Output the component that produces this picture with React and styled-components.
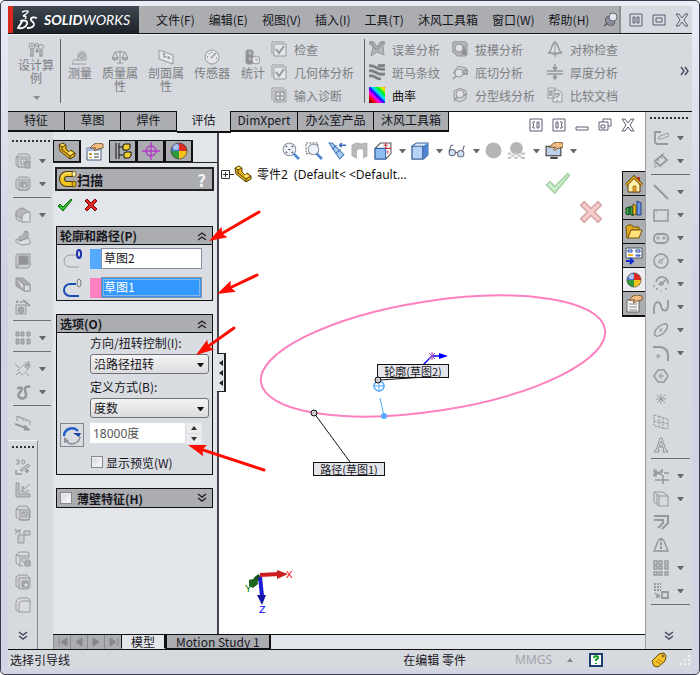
import React, { useState } from 'react';
import styled, { createGlobalStyle, css } from 'styled-components';

const Colors = {
  face: '#d6d9de',
  bar: '#abadb1',
  panel: '#e2e5ea',
  ink: '#16161c',
  dim: '#7c7e82',
  icon: '#96989c',
  blue: '#3399ff',
  pink: '#ff80c0',
};

const GlobalStyle = createGlobalStyle`
  * { box-sizing: border-box; }
  body {
    margin: 0;
    font-family: "Noto Sans CJK SC", sans-serif;
    font-size: 12px;
    line-height: 13px;
    color: ${Colors.ink};
  }
  button, input, select {
    font: inherit;
    color: inherit;
    margin: 0;
    padding: 0;
  }
  button {
    border: 0;
    background: none;
    cursor: pointer;
  }
  svg { display: block; flex: none; }
`

/* ---------- icons ---------- */

const glyphs = {
  cubeA: <><path d="M1 4l3-3h8l3 2v7M1 4v8l2 2h5M1 4h2" /><path d="M3 4h10v10H3z" fill="#cdcfd3" /><path d="M6 6h5v5H6z" fill="#e2e4e7" /><path d="M8 8l3 1h4v6h-5v-4z" fill="#b0b2b6" /></>,
  cubeB: <><path d="M1 4l3-3h8l3 2v9l-2 2H4l-3-2z" fill="#cdcfd3" /><path d="M4 4h9v10H4z" /><path d="M6 6h5v5H6z" fill="#a8aaae" /><path d="M8 8h3v3H8z" fill="#eee" /></>,
  fillet: <><path d="M1 6c0-3 4-5 7-5l6 4c-4 0-7 3-7 7L1 9z" fill="#b4b6ba" /><path d="M7 15v-4c0-3 3-6 8-6v10z" fill="#dfe1e4" /><path d="M1 6v6l6 3" /></>,
  rib: <><path d="M1 9l4 2 8-3 2 3v3l-8 1-6-3z" fill="#dcdee1" /><path d="M4 10V7c3 0 5-3 6-6l2 1v6l-7 3z" fill="#b0b2b6" /><path d="M10 1l3 1v6" /></>,
  shell: <><path d="M1 2l2-1h12v12l-2 2H1z" fill="#c9cbcf" /><path d="M4 3h9v8H4z" fill="#909296" /><path d="M4 11l-3 4M4 11h9l2-1" /></>,
  draft: <><path d="M1 2h7l7 6v7H9L1 10z" fill="#a8aaae" /><path d="M1 2l8 7v6M9 9h6v6H9z" fill="#d9dbde" /></>,
  wizard: <><path d="M1 6h10v9H1z" fill="#cdcfd3" /><circle cx="6" cy="11" r="3" fill="#a8aaae" /><circle cx="5" cy="10" r="1" fill="#eee" /><path d="M8 1l7 6" strokeWidth="2" /><path d="M2 1v3M1 3h3M6 2v2M5 3h3M13 1v1" /></>,
  pattern: <path d="M1 2h3v4H1zM6 2h3v4H6zM12 2h3v4h-3zM1 9h3v5H1zM6 9h3v5H6zM12 9h3v5h-3z" fill="#b0b2b6" strokeLinejoin="round" />,
  refgeo: <><path d="M3 9l6-5 4 5-6 5z" strokeDasharray="2 1" fill="#d9dbde" /><path d="M0 3l4 4M1 14l4-3M11 12l3 3M13 0v8M9 4h7M10 1l5 6M15 1l-5 6" /></>,
  curve: <path d="M2 4c3 0 5-1 5 1s-6 5-3 8 8 1 7-3c-1-3-2-6 0-7s3 0 4-1" strokeWidth="2.6" />,
  instant: <><path d="M2 6V1l13 5v4M5 2v2M8 3v3M11 5v2" /><path d="M0 9l11 4" strokeWidth="2" /><path d="M10 10l5 5-6 0z" fill="#96989c" /></>,
  sketch3d: <><path d="M1 1h3v4H1m1-2h2M7 1h2l1 2-1 2H7z" /><path d="M5 11l8-6 2 2-8 5z" fill="#c3c5c9" /><path d="M1 11v4h6M12 10v4M10 12h4" strokeWidth="1.5" /></>,
  bend: <><path d="M1 1h3v11h11v3H1z" fill="#bcbec2" /><path d="M6 10l9-8M7 4v6h6M9 4l-1 3M12 8l2 1" /></>,
  cubeC: <><path d="M1 4l3-3h8l3 4v8l-2 2H5l-4-3z" fill="#d0d2d6" /><path d="M5 5h9v10H5zM1 4l4 1" /><path d="M7 7h5v5H7zM9 7v3h3" /></>,
  weld: <><path d="M0 1l6 5M6 1L0 6M0 3h6" /><path d="M3 7h12V3H9v4M3 7v8h6V7" fill="#c9cbcf" /></>,
  cubeD: <><path d="M1 4l3-3h9l1 2v4M1 4v8l4 3h3M1 4l4 1h9M5 5v10" /><path d="M7 7h5l3 3v4h-4l-4-4z" fill="#cdcfd3" /><path d="M10 10h5v5h-5z" fill="#b0b2b6" /></>,
  cubeE: <><path d="M1 3l3-2h8l3 3v9l-2 2H5l-4-3z" fill="#d0d2d6" /><path d="M4 4h11M4 4v10" /><path d="M7 7h6v6H7z" fill="#a8aaae" /><path d="M9 9h4v4H9z" fill="#dfe1e4" /></>,
  corner: <path d="M1 13V6c0-3 2-5 5-5h7l2 2v12H4zM4 15V8c0-3 2-4 4-4h7" fill="#d9dbdf" />,
  pencil: <><path d="M15 14H5c-2 0-3-1-3-3V2h6M2 2v9" strokeWidth="1.8" /><path d="M5 9l2-3 8-3 1 3-8 3z" fill="#d9dbde" /></>,
  dimension: <><path d="M2 8l7-6 5 5-7 6z" strokeWidth="1.8" /><path d="M5 6l1 2M8 4l1 2M1 10l3 4M10 1l1-1M3 14h-2" /></>,
  lineG: <path d="M1 1l14 14" strokeWidth="2" />,
  rectG: <><path d="M1 3h14v11H1z" strokeWidth="1.6" /><path d="M3 5h1M12 12h1" /></>,
  slot: <><rect x="1" y="4" width="14" height="9" rx="4" strokeWidth="1.8" /><path d="M4 7h2v2H4zM10 7h2v2h-2z" /></>,
  circle: <><circle cx="8" cy="8" r="7" strokeWidth="1.5" /><path d="M6 7h3v3H6zM9 7l4-4" /></>,
  arc: <><path d="M3 6a6 6 0 0 1 12 2" strokeWidth="1.6" /><path d="M1 9v2M3 13h2M8 15h1M12 13h2M8 5v5M5 8h6M9 7l5-4" strokeWidth="1.4" /></>,
  spline: <path d="M1 15V9c1-8 6-7 7-2s6 7 7 0V1" strokeWidth="1.8" />,
  ellipse: <><ellipse cx="8" cy="8" rx="8" ry="4" transform="rotate(-42 8 8)" strokeWidth="1.5" /><path d="M6 7l3 2M9 6L7 10" /></>,
  filletG: <><path d="M0 2h6c5 0 9 3 9 8v6" strokeWidth="2" /><path d="M3 11h5M5 9v5" /></>,
  polygon: <><path d="M5 2h6l4 6-4 6H5L1 8z" strokeWidth="1.5" /><path d="M5 8h6M8 5v6" /></>,
  point: <path d="M8 3v10M3 8h10M4 4l8 8M12 4l-8 8" />,
  plane: <path d="M1 1l14 4v10L1 12zM6 2v12M10 4v11M1 7l14 3" strokeDasharray="2 1" />,
  textA: <path d="M1 15l1-2 1 0L7 1h2l4 12h1l1 2h-5v-2h1l-1-3H6l-1 3h1v2zM6 9h4L8 4z" />,
  trim: <><path d="M1 3l8 4M1 7l8-4M9 1v4M11 5h5M2 12h14M10 7v9" strokeWidth="1.6" /><circle cx="2" cy="3" r="1.5" /><circle cx="2" cy="7" r="1.5" /></>,
  convert: <path d="M1 1h9l5 4v10H6l-5-4zM1 1l5 4v10M6 5h9M4 3v10" />,
  offset: <path d="M1 2h14v7l-6 6M1 6h9v3l-5 5" strokeWidth="2" />,
  mirror: <><path d="M1 14L5 4c1-3 5-3 6 0l4 10z" strokeWidth="1.5" /><path d="M8 1v14" strokeDasharray="3 1" strokeWidth="2" /></>,
  grid9: <path d="M1 1h3v3H1zM6 1h3v3H6zM12 1h3v3h-3zM1 6h3v3H1zM6 6h3v3H6zM12 6h3v3h-3zM1 12h3v3H1zM6 12h3v3H6zM12 12h3v3h-3z" strokeWidth="1.4" />,
  move: <><path d="M1 1h7M1 4h7M1 7h7" strokeDasharray="2 1" strokeWidth="2" /><path d="M9 9h6v6H9z" strokeWidth="1.8" /><path d="M2 10l4 4M6 11v3H3" strokeWidth="1.5" /></>,
  study: <><circle cx="4" cy="4" r="3" /><circle cx="4" cy="4" r="1" /><circle cx="13" cy="5" r="2.5" /><circle cx="9" cy="3" r="1.5" /><path d="M3 7v7h2V7M12 8v6h2V8M7 9h4M9 6v5" strokeWidth="1.3" /></>,
  measure: <><path d="M1 11h13V5l-2-2H8L6 5v6M0 12v3h14" /><circle cx="10" cy="7" r="2.5" fill="#b9bbbf" /></>,
  scale: <><path d="M8 1v13M3 3h10M5 14h6M0 9l3-6 3 6zM10 9l3-6 3 6z" /><path d="M0 9h6c0 3-6 3-6 0zM10 9h6c0 3-6 3-6 0z" fill="#b9bbbf" /></>,
  section: <><path d="M1 1l14 5v9L1 10z" fill="#e4e6ea" /><path d="M6 9V5m-1 1l1-2 1 2M6 7l5 2m-1-2l2 2-2 1" /></>,
  gauge: <><circle cx="8" cy="8" r="7" fill="#e4e6ea" /><path d="M7 9l5-5M3 8h1M8 3v1M5 4l1 1M12 9h1" strokeWidth="1.5" /></>,
  stats: <><rect x="1" y="1" width="7" height="14" rx="2" fill="#8e9094" /><circle cx="5" cy="4" r="2" fill="#bbb" /><circle cx="5" cy="10" r="2" fill="#bbb" /><circle cx="11" cy="11" r="4" fill="#e4e6ea" /><path d="M11 9v2h2" /></>,
  checkBox: <><path d="M1 13V1h12M3 3h12v12H3z" fill="#e4e6ea" /><path d="M5 8l3 4 5-7" strokeWidth="2" /></>,
  plusBox: <><path d="M1 13V1h12M3 3h12v12H3z" fill="#e4e6ea" /><path d="M5 5h8v8H5zM9 6v6M6 9h6" strokeWidth="1.5" /></>,
  deviation: <><path d="M1 1h4l3 5 3-5h4l-1 4 1 9-7-3-6 4 2-9z" fill="#b4b6ba" /><path d="M2 1l5 8M14 1L8 9M1 4V1h3M12 1h3v3" strokeWidth="1.5" /></>,
  zebra: <path d="M0 2c6-2 7 5 16 3M0 7c6-2 7 5 16 3M0 12c6-2 7 4 12 3M9 1c2 1 4 1 7 0" stroke="#7e8084" strokeWidth="3" />,
  draftA: <><path d="M0 2l3-2h9l3 2v12l-2 1H5l-5-5z" fill="#b0b2b6" /><path d="M12 5l3 9-5-1z" fill="#888a8e" /><circle cx="7" cy="7" r="4" fill="#dfe1e4" /></>,
  undercut: <><path d="M1 9l5-7 8 2 2 6H4z" fill="#cfd1d5" /><circle cx="7" cy="9" r="4" fill="#dfe1e5" /><path d="M4 12l-3 3M12 6h3v4h-3z" strokeWidth="1.5" /></>,
  parting: <><path d="M2 4l6-3 6 3v8l-6 3-6-3z" fill="#cfd1d5" /><circle cx="8" cy="7" r="4" fill="#dfe1e5" /><path d="M5 10l-3 4M11 9l4-2" strokeWidth="1.5" /></>,
  symmetry: <><path d="M1 12c4-1 3-9 7-11 4 2 3 10 7 11z" fill="#dfe1e5" strokeWidth="1.5" /><path d="M8 2v14M4 12c1 2 7 2 8 0" /></>,
  thickness: <><path d="M0 7h16M0 10h16M8 0v5M6 3l2 3 2-3M8 16v-4M6 14l2-3 2 3" strokeWidth="1.5" /></>,
  compare: <><path d="M1 1h7v10H1zM6 3h5l4 3v9H6z" fill="#e4e6ea" /><path d="M2 4h3M2 6h3M2 8h3M9 8c0-2 4-2 3 0l-2 2v1M10 13v1" strokeWidth="1.5" /></>,
};

const Glyph = ({ name, size = 16, color = Colors.icon }) => (
  <svg width={size} height={size} viewBox="0 0 16 16" fill="none" stroke={color}>
    {glyphs[name]}
  </svg>
)

const Caret = ({ color = '#66686c' }) => (
  <svg width="7" height="4" viewBox="0 0 7 4"><path d="M0 0h7L4 4H3z" fill={color} /></svg>
)

const Chevrons = ({ up, right, color = '#222' }) => (
  <svg width="10" height="10" viewBox="0 0 10 10" fill="none" stroke={color} strokeWidth="1.4"
    transform={up ? 'rotate(180)' : right ? 'rotate(-90)' : undefined}>
    <path d="M1 1l4 3 4-3M1 5l4 3 4-3" />
  </svg>
)

const PartIcon = ({ size = 18 }) => (
  <svg width={size} height={size} viewBox="0 0 18 18" stroke="#54400a" strokeLinejoin="round">
    <path d="M1 3l4-2 3 2v4l3 3 2-2 4 3v3l-5 3L2 9z" fill="#e8b41a" />
    <path d="M1 3l3 2 4-2M4 5v3l8 6v3M12 14l5-3" fill="none" />
    <path d="M5 2l2 1-3 1-2-1zM12 9l3 2-3 2-2-2z" fill="#fbe86c" stroke="none" />
  </svg>
)

const Ball = ({ size = 18 }) => (
  <svg width={size} height={size} viewBox="0 0 18 18">
    <path d="M9 9V1a8 8 0 0 0-8 8z" fill="#4a78d8" />
    <path d="M9 9V1a8 8 0 0 1 8 8z" fill="#e02c20" />
    <path d="M9 9h8a8 8 0 0 1-8 8z" fill="#f4c51c" />
    <path d="M9 9H1a8 8 0 0 0 8 8z" fill="#2f9a3c" />
    <circle cx="6" cy="5" r="3" fill="#fff" opacity=".55" />
    <circle cx="9" cy="9" r="8" fill="none" stroke="#4a3a30" strokeWidth=".7" />
  </svg>
)

const Hand = () => (
  <path d="M4 5l4-4 4-1 5 1v4l-5 1-3 2-1-1 2-2H5z" fill="#f0bd82" stroke="#6b4218" strokeWidth=".8" />
)

const SheetIcon = () => (
  <svg width="18" height="18" viewBox="0 0 18 18">
    <path d="M1 5h14v12H1z" fill="#fafcff" stroke="#4b5d7d" />
    <path d="M1 5h14v3H1z" fill="#9eb6dc" />
    <path d="M3 10h3v2H3zM3 14h3v1H3z" fill="#c8942c" />
    <path d="M8 11h5M8 14h5" stroke="#444" />
    <Hand />
  </svg>
)

const TreeIcon = () => (
  <svg width="18" height="18" viewBox="0 0 18 18" stroke="#111">
    <path d="M2 1v16M5 1v16M5 5h4M5 13h4" />
    <path d="M9 3l2-1h5v4l-2 2H9zM10 11l2-1h5v4l-2 2h-5z" fill="#f0cf2c" />
  </svg>
)

const TargetIcon = () => (
  <svg width="18" height="18" viewBox="0 0 18 18" fill="none" stroke="#b43cc8" strokeWidth="1.4">
    <circle cx="9" cy="9" r="5" /><path d="M9 0v18M0 9h18" />
  </svg>
)

const SweepIcon = () => (
  <svg width="18" height="18" viewBox="0 0 18 18" fill="none">
    <path d="M15 4H8a5 5 0 0 0 0 10h7" stroke="#4a3a06" strokeWidth="6" />
    <path d="M15 4H8a5 5 0 0 0 0 10h7" stroke="#f2c522" strokeWidth="4" />
    <path d="M15 3H8c-3 0-5 2-5 5" stroke="#fff2a8" />
    <ellipse cx="15" cy="4" rx="2" ry="3" fill="#fff0a0" stroke="#4a3a06" strokeWidth=".7" />
    <ellipse cx="15" cy="14" rx="2" ry="3" fill="#e8ae18" stroke="#4a3a06" strokeWidth=".7" />
  </svg>
)

const Tick = ({ w = 16, fill = '#2fc02f', edge = '#0c640c' }) => (
  <svg width={w} height={w * 14 / 16} viewBox="0 0 16 14">
    <path d="M1 8l2-2 3 3 8-8 1 1-9 11z" fill={fill} stroke={edge} />
  </svg>
)

const Cross = ({ w = 14, fill = '#e02828', edge = '#7c0a0a' }) => (
  <svg width={w} height={w} viewBox="0 0 14 14">
    <path d="M1 3l2-2 4 4 4-4 2 2-4 4 4 4-2 2-4-4-4 4-2-2 4-4z" fill={fill} stroke={edge} />
  </svg>
)

const ProfileIcon = ({ path }) => (
  <svg width="20" height="20" viewBox="0 0 20 20" fill="none">
    <path d="M14 6H8a6 6 0 0 0 0 12h9" stroke={path ? '#1c4fb4' : '#9a9ca2'} strokeWidth={path ? 2 : 1} />
    <ellipse cx="17" cy="5" rx="2" ry="4" stroke={path ? '#777' : '#1b2fae'} strokeWidth={path ? 1 : 2} />
  </svg>
)

const TwistIcon = () => (
  <svg width="20" height="20" viewBox="0 0 20 20" fill="none">
    <path d="M2 11a8 8 0 0 1 14-5" stroke="#1f5fc8" strokeWidth="2.4" />
    <path d="M11 8h8l-2 4z" fill="#1a3fa0" />
    <path d="M18 12a8 8 0 0 1-14 4" stroke="#8d9096" strokeWidth="1.6" />
    <path d="M2 18v-6l5 4z" fill="#8d9096" />
  </svg>
)

/* ---------- window frame ---------- */

const Frame = styled.div`
  display: flex;
  flex-direction: column;
  min-width: 700px;
  min-height: 100vh;
  padding: 5px 7px;
  border: 1px solid #3a3a4a;
  border-radius: 5px;
  background: linear-gradient(#e9edf6, #d0d2e3 40%, #d3d4e4);
`

const MenuBar = styled.header`
  display: flex;
  height: 28px;
  border-bottom: 1px solid #111;
  background: ${Colors.face};
`

const Logo = styled.div`
  display: flex;
  flex: none;
  align-items: center;
  width: 131px;
  gap: 6px;
  padding-left: 3px;
  border-left: 5px solid #da291c;
  background: linear-gradient(#3f4850, #1c2228);
  color: #fff;
  font-family: Lato, sans-serif;
  font-size: 14px;
  font-style: italic;
`

const Menu = styled.nav`
  display: flex;
  flex: 1;
  align-items: center;
  gap: 14px;
  padding-left: 17px;
  border-right: 2px solid #8d8f93;
  background: ${Colors.bar};
`

const MenuItem = styled.button`
  white-space: nowrap;
`

const WindowButtons = styled.div`
  display: flex;
  align-items: center;
  gap: 9px;
  padding: 0 4px 0 8px;
`

const WinIcon = ({ kind }) => (
  <svg width="14" height="14" viewBox="0 0 14 14" fill="none" stroke="#5c5f72">
    {kind === 'tile' && <path d="M1 1h12v12H1zM4 4h2v6H4zM8 4h2v6H8z" />}
    {kind === 'max' && <path d="M1 2h12v10H1zM4 5h6v4H4z" />}
    {kind === 'close' && <path d="M1 1h3l3 4 3-4h3L9 7l4 6h-3L7 9l-3 4H1l4-6z" />}
    {kind === 'left' && <path d="M1 1h12v12H1zM6 4H4v2l1 1-1 1v2h2M8 4h2v6H8z" />}
    {kind === 'right' && <path d="M1 1h12v12H1zM4 4h2v6H4zM8 4h2v2l-1 1 1 1v2H8" />}
    {kind === 'min' && <path d="M1 9h12v3H1z" />}
    {kind === 'restore' && <path d="M5 1h8v7h-3M5 4V1M1 4h9v8H1zM3 7h4v3H3z" />}
  </svg>
)

/* ---------- ribbon ---------- */

const Ribbon = styled.section`
  display: flex;
  height: 78px;
  padding-top: 4px;
  border-top: 1px solid #eef0f4;
  border-bottom: 1px solid #111;
  background: ${Colors.face};
  color: ${Colors.dim};
`

const RibbonButton = styled.button`
  display: flex;
  flex: none;
  flex-direction: column;
  align-items: center;
  width: ${p => p.$width}px;
  padding: ${p => (p.$first ? '3px 4px 0 8px' : '10px 4px 0')};
  gap: ${p => (p.$first ? 0 : 1)}px;
`

const Rule = styled.div`
  flex: none;
  width: 1px;
  height: 64px;
  margin-right: ${p => p.$gap}px;
  background: #5e6064;
`

const RibbonColumn = styled.div`
  display: flex;
  flex-direction: column;
  margin-right: ${p => p.$gap}px;
`

const RibbonRow = styled.button`
  display: flex;
  align-items: center;
  gap: 7px;
  height: 23px;
  padding-bottom: 3px;
  white-space: nowrap;
  color: ${p => (p.$on ? '#111' : 'inherit')};
`

const More = styled.button`
  margin: 0 2px 8px auto;
`

/* ---------- body ---------- */

const Body = styled.div`
  display: flex;
  flex: 1;
  border-bottom: 1px solid #111;
`

const Workspace = styled.div`
  position: relative;
  display: flex;
  flex: 1;
  flex-direction: column;
  min-width: 0;
  background: #fff;
`

const TabRow = styled.div`
  display: flex;
  height: 20px;
`

const Tab = styled.button`
  height: 20px;
  padding: 0 0 3px;
  width: ${p => p.$width}px;
  border: 1px solid #111;
  border-width: 0 1px 2px 0;
  background: ${Colors.bar};
  white-space: nowrap;
  ${p => p.$active && css`
    height: 22px;
    margin-top: -1px;
    background: ${Colors.face};
    z-index: 1;
  `}
`

const DocButtons = styled.div`
  position: absolute;
  top: 6px;
  right: 10px;
  display: flex;
  gap: 9px;
`

const Work = styled.div`
  display: flex;
  flex: 1;
`

const ToolDock = styled.aside`
  display: flex;
  flex-direction: column;
  width: ${p => (p.$right ? 47 : 45)}px;
  border-left: ${p => (p.$right ? '1px solid #9a9ca0' : '0')};
  background: ${Colors.face};
`

const ToolStrip = styled.div`
  display: flex;
  flex-direction: column;
  padding: ${p => (p.$tall ? '8px 0 6px' : '5px 0 0')};
  ${p => p.$narrow && css`
    flex: 1;
    width: 30px;
    border-right: 1px solid #85878b;
    border-top: 1px solid #f4f5f7;
  `}
`

const Grip = styled.div`
  height: 2px;
  margin: 0 3px 7px 4px;
  background: repeating-linear-gradient(90deg, #333 0 2px, transparent 2px 4px);
`

const Tool = styled.button`
  display: flex;
  align-items: center;
  gap: 8px;
  height: 23px;
  padding-left: 7px;
`

const Divider = styled.div`
  height: 1px;
  margin: 2px 2px 5px 5px;
  background: #6c6e73;
`

const StripMore = styled.button`
  margin: auto auto 8px;
`

/* ---------- property manager ---------- */

const Center = styled.div`
  display: flex;
  flex: 1;
  flex-direction: column;
  min-width: 0;
`

const Stage = styled.div`
  display: flex;
  flex: 1;
`

const Panel = styled.aside`
  width: 166px;
  padding-top: 8px;
  border-right: 2px solid #44464c;
  background: ${Colors.panel};
`

const PanelTabs = styled.div`
  display: flex;
  border-bottom: 1px solid #222;
`

const PanelTab = styled.button`
  display: flex;
  align-items: center;
  justify-content: center;
  width: 28px;
  height: 22px;
  border: 1px solid #111;
  border-width: 1px 2px 1px 1px;
  background: ${Colors.bar};
  ${p => p.$active && css`
    height: 23px;
    margin-bottom: -1px;
    border-color: ${Colors.panel};
    background: ${Colors.panel};
  `}
`

const PanelTitle = styled.h1`
  display: flex;
  align-items: center;
  height: 24px;
  margin: 4px 3px 5px 2px;
  padding: 0 6px 0 2px;
  border: 2px solid #222;
  background: ${Colors.bar};
  font-size: 13px;
  font-weight: 700;
`

const Help = styled.button`
  margin-left: auto;
  color: #f4f4f4;
  font-size: 17px;
  font-weight: 700;
`

const Confirm = styled.div`
  display: flex;
  align-items: center;
  gap: 11px;
  height: 18px;
  margin: 0 0 12px 4px;
`

const Group = styled.section`
  margin: 0 4px 13px 3px;
  border: 1px solid #111;
  background: #d9dce1;
`

const GroupHead = styled.h2`
  display: flex;
  align-items: center;
  justify-content: space-between;
  height: 18px;
  margin: 0;
  padding: 0 5px 0 3px;
  background: ${Colors.bar};
  border-bottom: ${p => (p.$closed ? '0' : '1px solid #111')};
  font-size: 12px;
  font-weight: 700;

  label {
    display: flex;
    align-items: center;
    gap: 5px;
  }
`

const Selections = styled.div`
  display: flex;
  flex-direction: column;
  gap: 8px;
  padding: 3px 10px 2px 5px;
`

const Selection = styled.label`
  display: flex;
  align-items: center;
`

const Swatch = styled.span`
  width: 11px;
  height: 20px;
  margin-left: 8px;
  background: ${p => p.$color};
`

const SelectionInput = styled.input`
  flex: 1;
  min-width: 0;
  height: 21px;
  padding: 0 2px 2px;
  border: 1px solid #8b8da0;
  border-radius: 0;
  background: ${p => (p.$active ? Colors.blue : '#fff')};
  color: ${p => (p.$active ? '#fff' : Colors.ink)};
  outline: ${p => (p.$active ? '1px solid #85b8e6' : 'none')};
  outline-offset: -3px;
`

const Options = styled.div`
  display: flex;
  flex-direction: column;
  padding: 2px 3px 3px;
`

const FieldLabel = styled.label`
  height: 19px;
  padding-top: 1px;
  margin-left: 30px;
`

const SelectBox = styled.div`
  position: relative;
  margin: 0 0 5px 30px;

  select {
    width: 100%;
    height: 20px;
    padding: 0 3px 1px;
    appearance: none;
    border: 1px solid #707278;
    border-radius: 3px;
    background: linear-gradient(#f4f4f4, #dcdcde);
  }
  svg {
    position: absolute;
    right: 5px;
    top: 9px;
    pointer-events: none;
  }
`

const AngleRow = styled.div`
  display: flex;
  align-items: flex-start;
  height: 30px;
`

const DirButton = styled.button`
  display: flex;
  align-items: center;
  justify-content: center;
  width: 24px;
  height: 24px;
  margin-right: 6px;
  border: 1px solid #84868e;
`

const AngleInput = styled.input`
  width: 95px;
  height: 20px;
  padding: 0 3px;
  border: 0;
  background: #fff;
  color: #555;
  font-family: "Noto Sans", "Noto Sans CJK SC", sans-serif;
`

const Spinner = styled.div`
  display: flex;
  flex-direction: column;
  gap: 1px;
  width: 16px;
  margin-left: 1px;

  button {
    display: flex;
    align-items: center;
    justify-content: center;
    height: 10px;
    background: #ececee;
  }
`

const Check = styled.input`
  appearance: none;
  width: 12px;
  height: 12px;
  border: 1px solid #888a90;
  background: linear-gradient(135deg, #d2d5d9, #fff);
  box-shadow: inset 0 0 0 1px #eee;
  &:checked {
    background: #446;
  }
`

const CheckLabel = styled.label`
  display: flex;
  align-items: center;
  gap: 3px;
  height: 18px;
  margin-left: 31px;
`

/* ---------- graphics area ---------- */

const Canvas = styled.main`
  position: relative;
  flex: 1;
  background: #fff;
`

const Handle = styled.button`
  position: absolute;
  left: -2px;
  top: 221px;
  display: flex;
  align-items: center;
  justify-content: center;
  width: 9px;
  height: 39px;
  border: 1px solid #222;
  border-width: 1px 2px 1px 0;
  background: ${Colors.panel};
`

const ViewTools = styled.div`
  position: absolute;
  left: 63px;
  top: 10px;
  display: flex;
  align-items: center;
  gap: 5px;
`

const ViewTool = styled.button`
  display: flex;
  align-items: center;
  gap: 7px;
`

const TreeRoot = styled.div`
  position: absolute;
  left: 2px;
  top: 33px;
  display: flex;
  align-items: center;
  white-space: pre;
  color: #111;
  font-family: "Noto Sans", "Noto Sans CJK SC", sans-serif;

  span {
    margin-left: 5px;
  }
`

const Corner = styled.div`
  position: absolute;
  top: 40px;
  right: 42px;
  display: flex;
  align-items: flex-start;
  gap: 8px;

  button + button {
    margin-top: 28px;
  }
`

const TaskPane = styled.div`
  position: absolute;
  top: 39px;
  right: 0;
  display: flex;
  flex-direction: column;
  width: 23px;
  border: 1px solid #111;
  border-right: 0;
`

const TaskTab = styled.button`
  display: flex;
  align-items: center;
  justify-content: center;
  height: 24px;
  border-bottom: 1px solid #111;
  background: ${p => (p.$active ? '#eceef2' : Colors.bar)};
`

const Drawing = styled.svg`
  position: absolute;
  inset: 0;
  width: 100%;
  height: 100%;
  overflow: visible;
  pointer-events: none;
`

const Callout = styled.div`
  position: absolute;
  left: ${p => p.$x}px;
  top: ${p => p.$y}px;
  width: 72px;
  height: 14px;
  border: 1px solid #111;
  background: #e4e5ea;
  font-size: 11px;
  line-height: 12px;
  text-align: center;
`

/* ---------- bottom ---------- */

const SheetTabs = styled.div`
  display: flex;
  height: 15px;
  border-top: 1px solid #111;
  background: ${Colors.panel};
`

const StepButton = styled.button`
  display: flex;
  align-items: center;
  justify-content: center;
  width: 17px;
  border-left: 1px solid #8a8c90;
  background: ${Colors.bar};
`

const SheetTab = styled.button`
  padding: 0 9px;
  border: 1px solid #111;
  border-width: 0 2px 1px 1px;
  line-height: 12px;
  background: ${p => (p.$active ? Colors.panel : Colors.bar)};
  border-bottom-color: ${p => (p.$active ? Colors.panel : '#111')};
`

const StatusBar = styled.footer`
  display: flex;
  align-items: center;
  height: 19px;
  padding-left: 2px;
  background: ${Colors.face};
`

const Status = styled.span`
  white-space: nowrap;
  flex: ${p => (p.$grow ? 1 : 'none')};
`

const Units = styled.button`
  display: flex;
  align-items: center;
  gap: 15px;
  margin: 0 16px 0 49px;
  color: #a3a5a9;
  font-family: "Noto Sans", sans-serif;
`

const StatusIcons = styled.div`
  display: flex;
  align-items: center;
  gap: 48px;
`

const menus = ['文件(F)', '编辑(E)', '视图(V)', '插入(I)', '工具(T)', '沐风工具箱', '窗口(W)', '帮助(H)']

const evaluate = [
  ['measure', '测量', 34],
  ['scale', '质量属性', 46],
  ['section', '剖面属性', 46],
  ['gauge', '传感器', 46],
  ['stats', '统计', 36],
]

const analysis = [
  [['deviation', '误差分析'], ['zebra', '斑马条纹'], ['curvature', '曲率']],
  [['draftA', '拔模分析'], ['undercut', '底切分析'], ['parting', '分型线分析']],
  [['symmetry', '对称检查'], ['thickness', '厚度分析'], ['compare', '比较文档']],
]

const ribbonTabs = [
  ['特征', 57], ['草图', 56], ['焊件', 56], ['评估', 54], ['DimXpert', 67], ['办公室产品', 76], ['沐风工具箱', 75],
]

// a trailing * marks a tool that opens a flyout, '-' is a divider
const features = ['cubeA*', 'cubeB*', '-', 'fillet*', 'rib', 'shell', 'draft', 'wizard', '-', 'pattern*', '-', 'refgeo*', 'curve*', '-', 'instant']
const weldments = ['sketch3d', 'bend', 'cubeC', 'weld', 'cubeD', 'cubeE', 'corner']
const sketching = [
  'pencil*', 'dimension*', '-', 'lineG*', 'rectG*', 'slot*', 'circle*', 'arc*', 'spline*', 'ellipse*', 'filletG*',
  'polygon', 'point', 'plane', 'textA', '-', 'trim*', 'convert*', 'offset', 'mirror', 'grid9*', 'move*', '-',
]

const Tools = ({ items }) => items.map((item, i) => {
  if (item === '-') return <Divider key={i} />
  const name = item.replace('*', '')
  return (
    <Tool key={i} aria-label={name}>
      <Glyph name={name} />
      {item.endsWith('*') && <Caret />}
    </Tool>
  )
})

const CurvatureIcon = () => (
  <svg width="16" height="16" viewBox="0 0 16 16">
    <defs>
      <linearGradient id="curvature" x1="0" y1="1" x2="1" y2="0">
        <stop offset="0" stopColor="#400" /><stop offset=".2" stopColor="#f00" />
        <stop offset=".35" stopColor="#f0f" /><stop offset=".48" stopColor="#20f" />
        <stop offset=".6" stopColor="#0df" /><stop offset=".75" stopColor="#0e2" />
        <stop offset=".9" stopColor="#fe0" /><stop offset="1" stopColor="#f60" />
      </linearGradient>
    </defs>
    <path d="M0 0h16v16H0z" fill="url(#curvature)" />
  </svg>
)

const viewIcons = {
  zoomFit: <><circle cx="7" cy="7" r="6" fill="#eef3fa" stroke="#8a93a4" /><path d="M4 5V4h1M9 4h1v1M10 9v1H9M5 10H4V9M6 7h2" stroke="#444" fill="none" /><path d="M11 11l5 5" stroke="#4f86d0" strokeWidth="2.5" /></>,
  zoomArea: <><path d="M1 1h11v10H1z" stroke="#777" strokeDasharray="2 1" fill="none" /><circle cx="8" cy="7" r="5" fill="#eef3fa" stroke="#8a93a4" /><path d="M11 11l5 5" stroke="#4f86d0" strokeWidth="2.5" /></>,
  previous: <><path d="M1 1l3 0 11 11-4 4z" fill="#a9cdf2" stroke="#4d7cb4" /><path d="M4 7l4-4M7 11l5-4" stroke="#3a6db8" fill="none" /><path d="M17 3h-6M13 1l-2 2 2 2" stroke="#3a6db8" fill="none" strokeWidth="1.5" /></>,
  section: <path d="M1 3l4-2 5 1 5-1v12l-3 2V7L8 6 5 8v7l-4-2z" fill="#b9babc" stroke="#b0b1b3" />,
  orient: <><path d="M6 1h10v10l-5 5H1V6z" fill="#fff" stroke="#555" /><path d="M1 6h10v10H1z" fill="#8fbcf0" stroke="#2a62b0" /><path d="M11 1v5h5M9 3h4M13 8v3" stroke="#c33" fill="none" /></>,
  display: <><path d="M1 4l4-3h11v11l-4 4H1z" fill="#dbe9fb" stroke="#3d649c" /><path d="M11 4l5-3v11l-5 4z" fill="#4d84d4" /><path d="M1 4h10v12H1z" fill="#b6d2f6" stroke="#3d649c" /></>,
  glasses: <><circle cx="4" cy="10" r="3" fill="#cfe3f8" stroke="#667" /><circle cx="12" cy="11" r="3" fill="#cfe3f8" stroke="#667" /><path d="M7 10h2M1 9l2-6h2M14 8l1-4h1" stroke="#667" fill="none" /></>,
  appearance: <circle cx="8" cy="8" r="7.5" fill="#b4b5b7" />,
  scene: <><circle cx="8" cy="6" r="6" fill="#b4b5b7" /><path d="M0 10h3v2H0zM6 10h3v2H6zM12 10h4v2h-4zM3 12h3v2H3zM9 12h3v2H9zM0 14h3v2H0zM6 14h3v2H6zM12 14h4v2h-4z" fill="#c4c5c7" /></>,
  settings: <><path d="M1 4h14v9H1z" fill="#bcd0ea" stroke="#333" /><path d="M5 15h7" stroke="#444" strokeWidth="2" /><Hand /></>,
}

const viewTools = ['zoomFit', 'zoomArea', 'previous', 'section', 'orient*', 'display*', 'glasses*', 'appearance', 'scene*', 'settings*']

const taskIcons = {
  home: <><path d="M12 2h3v5h-3z" fill="#b33" /><path d="M3 9l6-6 6 6v8H3z" fill="#fff0a8" stroke="#5a3c08" /><path d="M1 10l8-8 8 8" fill="none" stroke="#5a3c08" strokeWidth="3" /><path d="M1 10l8-8 8 8" fill="none" stroke="#f0b820" strokeWidth="1.4" /><path d="M8 11h3v6H8z" fill="#e8a820" stroke="#7a4a10" strokeWidth=".6" /></>,
  library: <><path d="M1 9l3-1v8l-3-1zM5 7l3 2v8l-3-2z" fill="#35a848" stroke="#0c4416" /><path d="M8 5l3 2v9l-3-1z" fill="#f6c524" stroke="#6a4a08" /><path d="M12 2l4 2v12h-4z" fill="#6c98e4" stroke="#22407c" /></>,
  folder: <><path d="M1 4l2-2h4l1 2h6v3H6l-3 8H2z" fill="#e0a81c" stroke="#7a5408" /><path d="M6 7h11l-3 8H3z" fill="#ffe27a" stroke="#7a5408" /></>,
  palette: <><path d="M1 1h16v10H1z" fill="#f6f8fc" stroke="#456" /><path d="M3 3h4v2H3zM11 3h4v2h-4zM11 8h4v1h-4z" fill="#fff" stroke="#2347a8" /><path d="M3 7h5v2H3z" fill="#e9b820" /><path d="M1 14h6M5 11l3 3-3 3" stroke="#0b2fd0" strokeWidth="2" fill="none" /></>,
  props: <><path d="M2 5h12v12H2z" fill="#f4f4f2" stroke="#666" /><path d="M4 9h8M4 12h8M4 15h8" stroke="#888" /><Hand /></>,
}

function Property() {
  const [angle, setAngle] = useState(18000)
  return (
    <Panel>
      <PanelTabs>
        <PanelTab aria-label="FeatureManager"><PartIcon /></PanelTab>
        <PanelTab aria-label="PropertyManager" $active><SheetIcon /></PanelTab>
        <PanelTab aria-label="ConfigurationManager"><TreeIcon /></PanelTab>
        <PanelTab aria-label="DimXpertManager"><TargetIcon /></PanelTab>
        <PanelTab aria-label="DisplayManager"><Ball /></PanelTab>
      </PanelTabs>
      <PanelTitle><SweepIcon />扫描<Help>?</Help></PanelTitle>
      <Confirm>
        <button aria-label="确定"><Tick /></button>
        <button aria-label="取消"><Cross /></button>
      </Confirm>

      <Group>
        <GroupHead><span>轮廓和路径(P)</span><Chevrons up /></GroupHead>
        <Selections>
          <Selection>
            <ProfileIcon />
            <Swatch $color="#55aaff" />
            <SelectionInput defaultValue="草图2" aria-label="轮廓" />
          </Selection>
          <Selection>
            <ProfileIcon path />
            <Swatch $color={Colors.pink} />
            <SelectionInput defaultValue="草图1" aria-label="路径" $active />
          </Selection>
        </Selections>
      </Group>

      <Group>
        <GroupHead><span>选项(O)</span><Chevrons up /></GroupHead>
        <Options>
          <FieldLabel htmlFor="twist">方向/扭转控制(I):</FieldLabel>
          <SelectBox>
            <select id="twist"><option>沿路径扭转</option></select>
            <Caret color="#111" />
          </SelectBox>
          <FieldLabel htmlFor="define">定义方式(B):</FieldLabel>
          <SelectBox>
            <select id="define"><option>度数</option></select>
            <Caret color="#111" />
          </SelectBox>
          <AngleRow>
            <DirButton aria-label="反向"><TwistIcon /></DirButton>
            <AngleInput aria-label="角度" value={`${angle}度`} onChange={e => setAngle(parseInt(e.target.value, 10) || 0)} />
            <Spinner>
              <button aria-label="增加" onClick={() => setAngle(angle + 1)}>
                <svg width="6" height="4" viewBox="0 0 6 4"><path d="M0 4l3-4 3 4z" fill="#333" /></svg>
              </button>
              <button aria-label="减少" onClick={() => setAngle(angle - 1)}>
                <svg width="6" height="4" viewBox="0 0 6 4"><path d="M0 0l3 4 3-4z" fill="#333" /></svg>
              </button>
            </Spinner>
          </AngleRow>
          <CheckLabel><Check type="checkbox" />显示预览(W)</CheckLabel>
        </Options>
      </Group>

      <Group>
        <GroupHead $closed>
          <label><Check type="checkbox" />薄壁特征(H)</label>
          <Chevrons />
        </GroupHead>
      </Group>
    </Panel>
  )
}

const RedArrow = ({ x1, y1, x2, y2 }) => {
  const turn = Math.atan2(y2 - y1, x2 - x1) * 180 / Math.PI
  const length = Math.hypot(x2 - x1, y2 - y1)
  return (
    <g transform={`translate(${x1} ${y1}) rotate(${turn})`}>
      <path d={`M0 0H${length - 14}`} stroke="#ff0c00" strokeWidth="3" strokeLinecap="round" />
      <path d={`M${length} 0l-18-6 3 6-3 6z`} fill="#ff0c00" />
    </g>
  )
}

function Graphics() {
  return (
    <Canvas>
      <Drawing>
        <g fill="none">
          <ellipse cx="214" cy="224" rx="174" ry="55" transform="rotate(-8.8 214 224)" stroke={Colors.pink} strokeWidth="2" />
          <path d="M95 281l36 49M160 248l47-3" stroke="#111" />
          <path d="M161 266l4 18" stroke="#55aaff" />
          <circle cx="160" cy="254" r="5" stroke="#55aaff" strokeWidth="1.5" />
          <path d="M154 254h12M160 248v12" stroke="#55aaff" />
          <circle cx="165" cy="284" r="3" fill="#55aaff" />
          <path d="M204 233l9-9h9" stroke="#0000ff" strokeWidth="1.3" />
          <path d="M210 221l6 6M216 221l-6 6M213 220v8" stroke="#a040c0" />
          <path d="M220 221l9 3-9 3z" fill="#0000ff" />
          <circle cx="95" cy="281" r="3" fill="#ccc" stroke="#111" />
        </g>
        <g strokeWidth="4">
          <path d="M41 444l-5 4" stroke="#145014" strokeWidth="5" />
          <path d="M30 448l8-2 1 6-5 4-4-2z" fill="#1d651d" />
          <path d="M41 443l19-1" stroke="#d01c1c" />
          <path d="M58 438l11 4-11 5z" fill="#c82020" />
          <path d="M41 445l2 19" stroke="#1c1cd0" />
          <path d="M38 463h9l-4 10z" fill="#1414a0" />
        </g>
        <g fontFamily="Liberation Mono, monospace" fontSize="11">
          <text x="67" y="446" fill="#f00">X</text>
          <text x="26" y="460" fill="#008000">Y</text>
          <text x="40" y="481" fill="#00f">Z</text>
        </g>
      </Drawing>
      <Callout $x={158} $y={232}>轮廓(草图2)</Callout>
      <Callout $x={94} $y={330}>路径(草图1)</Callout>
      <Handle aria-label="折叠">
        <svg width="4" height="26" viewBox="0 0 4 26"><path d="M4 0v6L0 3zM4 10v6l-4-3zM4 20v6l-4-3z" fill="#222" /></svg>
      </Handle>
      <ViewTools>
        {viewTools.map(item => {
          const name = item.replace('*', '')
          return (
            <ViewTool key={name} aria-label={name}>
              <svg width="18" height="18" viewBox="0 0 17 17">{viewIcons[name]}</svg>
              {item.endsWith('*') && <Caret />}
            </ViewTool>
          )
        })}
      </ViewTools>
      <TreeRoot>
        <svg width="13" height="9" viewBox="0 0 13 9" fill="none" stroke="#333"><path d="M0.5 0.5h8v8h-8zM2 4.5h5M4.5 2v5M9 4.5h4" /></svg>
        <PartIcon />
        <span>零件2  (Default&lt; &lt;Default...</span>
      </TreeRoot>
      <Corner>
        <button aria-label="确定"><Tick w={26} fill="#cdf3cd" edge="#a9cfa9" /></button>
        <button aria-label="取消"><Cross w={24} fill="#f9cccc" edge="#d8a8a8" /></button>
      </Corner>
      <TaskPane>
        {['home', 'library', 'folder', 'palette', 'ball', 'props'].map(name => (
          <TaskTab key={name} aria-label={name} $active={name === 'ball'}>
            {name === 'ball' ? <Ball size={16} /> : <svg width="18" height="18" viewBox="0 0 18 18">{taskIcons[name]}</svg>}
          </TaskTab>
        ))}
      </TaskPane>
      <Drawing>
        <circle cx="159" cy="248" r="3" fill="#ccc" stroke="#111" />
        <RedArrow x1={40} y1={80} x2={-10} y2={109} />
        <RedArrow x1={38} y1={143} x2={-2} y2={162} />
        <RedArrow x1={15} y1={196} x2={-23} y2={223} />
        <RedArrow x1={45} y1={338} x2={-31} y2={313} />
      </Drawing>
    </Canvas>
  )
}

export default function App() {
  return (
    <Frame>
      <GlobalStyle />
      <MenuBar>
        <Logo>
          <svg width="22" height="22" viewBox="0 0 22 22" fill="none" stroke="#fff" strokeWidth="1.8">
            <path d="M6 3c3-1 7-2 6 0-1 2-3 3-5 4 3 0 4 1 2 3" strokeWidth="1.4" />
            <path d="M4 12c3-1 8-1 7 3-1 3-5 5-9 4l5-8" />
            <path d="M21 9c-3-1-7-1-6 2 1 2 4 3 3 5-1 3-4 3-7 3" />
          </svg>
          <span><b>SOLID</b>WORKS</span>
        </Logo>
        <Menu>
          {menus.map(m => <MenuItem key={m}>{m}</MenuItem>)}
          <svg width="16" height="16" viewBox="0 0 16 16">
            <path d="M1 14l5-4" stroke="#555" strokeWidth="1.5" />
            <ellipse cx="7" cy="9" rx="5" ry="4" fill="#8b8d9c" stroke="#555" transform="rotate(40 7 9)" />
            <circle cx="10" cy="5" r="4" fill="#e6e7ee" stroke="#666878" />
          </svg>
        </Menu>
        <WindowButtons>
          {['tile', 'max', 'close'].map(k => <button key={k} aria-label={k}><WinIcon kind={k} /></button>)}
        </WindowButtons>
      </MenuBar>

      <Ribbon>
        <RibbonButton $width={52} $first>
          <Glyph name="study" />
          <span>设计算例</span>
          <svg width="7" height="20" viewBox="0 0 7 20"><path d="M0 12h7l-3 4z" fill="#8a8c90" /></svg>
        </RibbonButton>
        <Rule $gap={2} />
        {evaluate.map(([icon, text, width]) => (
          <RibbonButton key={icon} $width={width}>
            <Glyph name={icon} />
            <span>{text}</span>
          </RibbonButton>
        ))}
        <RibbonColumn $gap={10}>
          <RibbonRow><Glyph name="checkBox" />检查</RibbonRow>
          <RibbonRow><Glyph name="checkBox" />几何体分析</RibbonRow>
          <RibbonRow><Glyph name="plusBox" />输入诊断</RibbonRow>
        </RibbonColumn>
        <Rule $gap={4} />
        {analysis.map((column, i) => (
          <RibbonColumn key={i} $gap={12}>
            {column.map(([icon, text]) => (
              <RibbonRow key={icon} $on={icon === 'curvature'}>
                {icon === 'curvature' ? <CurvatureIcon /> : <Glyph name={icon} />}
                {text}
              </RibbonRow>
            ))}
          </RibbonColumn>
        ))}
        <More aria-label="更多"><Chevrons right color="#444a60" /></More>
      </Ribbon>

      <Body>
        <Workspace>
          <TabRow>
            {ribbonTabs.map(([text, width]) => (
              <Tab key={text} $width={width} $active={text === '评估'}>{text}</Tab>
            ))}
          </TabRow>
          <Work>
            <ToolDock>
              <ToolStrip $tall>
                <Grip />
                <Tools items={features} />
              </ToolStrip>
              <ToolStrip $narrow>
                <Grip />
                <Tools items={weldments} />
                <StripMore aria-label="更多"><Chevrons color="#444a60" /></StripMore>
              </ToolStrip>
            </ToolDock>
            <Center>
              <Stage>
                <Property />
                <Graphics />
              </Stage>
              <SheetTabs>
                {['M4 1v8M12 1L6 5l6 4z', 'M10 1L4 5l6 4z', 'M4 1l6 4-6 4z', 'M12 1v8M4 1l6 4-6 4z'].map(d => (
                  <StepButton key={d} aria-label="step">
                    <svg width="14" height="10" viewBox="0 0 14 10"><path d={d} fill="#85878b" stroke="#85878b" /></svg>
                  </StepButton>
                ))}
                <SheetTab $active>模型</SheetTab>
                <SheetTab>Motion Study 1</SheetTab>
              </SheetTabs>
            </Center>
          </Work>
          <DocButtons>
            {['left', 'right', 'min', 'restore', 'close'].map(k => <button key={k} aria-label={k}><WinIcon kind={k} /></button>)}
          </DocButtons>
        </Workspace>
        <ToolDock $right>
          <ToolStrip>
            <Grip />
            <Tools items={sketching} />
          </ToolStrip>
          <StripMore aria-label="更多"><Chevrons color="#444a60" /></StripMore>
        </ToolDock>
      </Body>

      <StatusBar>
        <Status $grow>选择引导线</Status>
        <Status>在编辑 零件</Status>
        <Units>MMGS<svg width="6" height="4" viewBox="0 0 6 4"><path d="M0 4l3-4 3 4z" fill="#888" /></svg></Units>
        <StatusIcons>
          <button aria-label="帮助">
            <svg width="14" height="14" viewBox="0 0 14 14" fill="none">
              <path d="M1 1h12v12H1z" fill="#fff" stroke="#1c3c6c" strokeWidth="2" />
              <path d="M5 5c0-3 5-2 4 0L7 7v1M7 10v1" stroke="#14981c" strokeWidth="2" />
            </svg>
          </button>
          <button aria-label="标签">
            <svg width="16" height="16" viewBox="0 0 16 16">
              <path d="M1 9l7-7 5-1 2 3-1 5-7 6-4-1z" fill="#f6c42a" stroke="#6a4a08" />
              <circle cx="12" cy="4" r="1" fill="#fff" stroke="#6a4a08" /><path d="M5 9l4 3M7 7l4 3" stroke="#b07c10" />
            </svg>
          </button>
        </StatusIcons>
        <svg width="25" height="12" viewBox="0 0 25 12"><path d="M21 1h2v2h-2zM17 5h2v2h-2zM21 5h2v2h-2zM13 9h2v2h-2zM17 9h2v2h-2zM21 9h2v2h-2z" fill="#f4f4f6" /></svg>
      </StatusBar>
    </Frame>
  )
}
